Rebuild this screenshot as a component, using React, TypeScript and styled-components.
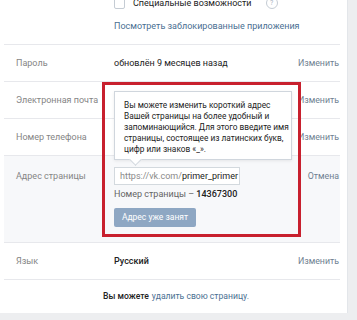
import { createGlobalStyle, styled } from "styled-components";

const GlobalStyle = createGlobalStyle`
  html, body {
    margin: 0;
    padding: 0;
    background: #edeef0;
    overflow: hidden;
  }
  body {
    font-family: Roboto, "Open Sans", sans-serif;
    font-size: 9px;
    color: #222;
  }
`;

const Card = styled.div`
  box-sizing: border-box;
  width: 347px;
  height: 321px;
  margin-top: -8px;
  padding: 0 7px 0 4px;
  background: #fff;
  box-shadow: 0 1px 0 #dce1e6, 1px 0 0 #e3e6ea;
`;

const TopBlock = styled.div`
  box-sizing: border-box;
  height: 52px;
  padding: 3px 0 0 110px;
`;

const CheckRow = styled.div`
  display: flex;
  align-items: center;
  gap: 8px;
  height: 16px;
  color: #222;
`;

const CheckBox = styled.span`
  width: 9px;
  height: 9px;
  border: 1px solid #c5ccd4;
  border-radius: 2px;
`;

const Help = styled.span`
  display: inline-flex;
  align-items: center;
  justify-content: center;
  width: 10px;
  height: 10px;
  margin-left: 6px;
  border: 1px solid #c5ccd4;
  border-radius: 50%;
  font-size: 7px;
  color: #aab4bf;
`;

const BlueLink = styled.span`
  color: #4a6f92;
`;

const LinkLine = styled.div`
  margin-top: 8px;
  line-height: 14px;
`;

const Row = styled.div<{ $active?: boolean; $tall?: boolean }>`
  display: grid;
  grid-template-columns: 110px 1fr auto;
  align-items: ${(p) => (p.$tall ? "start" : "center")};
  height: ${(p) => (p.$tall ? "87px" : "37px")};
  box-sizing: border-box;
  padding-top: ${(p) => (p.$tall ? "11px" : "0")};
  border-top: 1px solid #e7e8ec;
  background: ${(p) => (p.$active ? "#f7f8fa" : "transparent")};
  line-height: 18px;
`;

const Label = styled.div`
  padding-left: 12px;
  color: #858585;
`;

const Value = styled.div<{ $strong?: boolean }>`
  position: relative;
  color: #222;
  font-weight: ${(p) => (p.$strong ? 500 : 400)};
`;

const Action = styled.div`
  padding-right: 1px;
  color: #6f7f91;
  font-size: 8.8px;
`;

const Field = styled.div`
  box-sizing: border-box;
  width: 126px;
  height: 18px;
  padding: 0 5px;
  border: 1px solid #d3d9de;
  background: #fff;
  line-height: 16px;
  white-space: nowrap;
  overflow: hidden;
`;

const Prefix = styled.span`
  color: #8a8a8a;
`;

const Caret = styled.span`
  display: inline-block;
  width: 1px;
  height: 11px;
  margin-left: 1px;
  vertical-align: -2px;
  background: #222;
`;

const PageId = styled.div`
  margin-top: 2px;
  line-height: 14px;
  color: #656565;
  & b {
    color: #222;
    font-weight: 500;
  }
`;

const Button = styled.div`
  width: 82px;
  height: 19px;
  margin-top: 7px;
  background: #8ea7c3;
  border-radius: 2px;
  color: #fff;
  font-size: 8.5px;
  line-height: 19px;
  text-align: center;
`;

const RedFrame = styled.div`
  position: absolute;
  left: -12px;
  top: -85px;
  width: 199px;
  height: 155px;
  box-sizing: border-box;
  border: 3px solid #c8202e;
  z-index: 2;
  pointer-events: none;
`;

const Tooltip = styled.div`
  position: absolute;
  left: 0;
  top: -76px;
  box-sizing: border-box;
  width: 178px;
  height: 69px;
  padding: 8px 4px 0 9px;
  background: #fff;
  border: 1px solid #d0d6dd;
  box-shadow: 0 1px 3px rgba(0, 0, 0, 0.08);
  font-size: 8.3px;
  line-height: 10.9px;
  white-space: nowrap;
  color: #222;
  z-index: 3;
  &::after {
    content: "";
    position: absolute;
    left: 16px;
    bottom: -5px;
    width: 8px;
    height: 8px;
    background: #fff;
    border-right: 1px solid #d0d6dd;
    border-bottom: 1px solid #d0d6dd;
    transform: rotate(45deg);
  }
`;

const Footer = styled.div`
  height: 32px;
  border-top: 1px solid #e7e8ec;
  display: flex;
  align-items: center;
  justify-content: center;
  padding-left: 8px;
  font-size: 8.6px;
  & b {
    font-weight: 500;
    margin-right: 3px;
  }
`;

export default function App() {
  return (
    <>
      <GlobalStyle />
      <Card>
        <TopBlock>
          <CheckRow>
            <CheckBox />
            Специальные возможности
            <Help>?</Help>
          </CheckRow>
          <LinkLine>
            <BlueLink>Посмотреть заблокированные приложения</BlueLink>
          </LinkLine>
        </TopBlock>

        <Row>
          <Label>Пароль</Label>
          <Value>обновлён 9 месяцев назад</Value>
          <Action>Изменить</Action>
        </Row>
        <Row>
          <Label>Электронная почта</Label>
          <Value />
          <Action>Изменить</Action>
        </Row>
        <Row>
          <Label>Номер телефона</Label>
          <Value />
          <Action>Изменить</Action>
        </Row>
        <Row $active $tall>
          <Label>Адрес страницы</Label>
          <Value>
            <RedFrame />
            <Tooltip>
              Вы можете изменить короткий адрес
              <br />
              Вашей страницы на более удобный и
              <br />
              запоминающийся. Для этого введите имя
              <br />
              страницы, состоящее из латинских букв,
              <br />
              цифр или знаков «_».
            </Tooltip>
            <Field>
              <Prefix>https://vk.com/</Prefix>primer_primer
              <Caret />
            </Field>
            <PageId>
              Номер страницы – <b>14367300</b>
            </PageId>
            <Button>Адрес уже занят</Button>
          </Value>
          <Action>Отмена</Action>
        </Row>
        <Row>
          <Label>Язык</Label>
          <Value $strong>Русский</Value>
          <Action>Изменить</Action>
        </Row>
        <Footer>
          <b>Вы можете</b>
          <BlueLink>удалить свою страницу.</BlueLink>
        </Footer>
      </Card>
    </>
  );
}
